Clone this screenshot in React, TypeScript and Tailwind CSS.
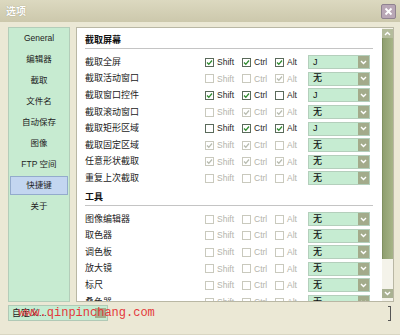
import React from "react";

type CS = "on" | "off" | "don" | "doff";

const FONT = "font-['Liberation_Sans','Noto_Sans_CJK_SC',sans-serif]";

function Box({ s }: { s: CS }) {
  const dis = s === "don" || s === "doff";
  const checked = s === "on" || s === "don";
  return (
    <div
      className={`w-[9px] h-[9px] border flex items-center justify-center ${
        dis ? "border-[#c9c9bd] bg-white" : "border-[#5a6a5a] bg-white"
      }`}
    >
      {checked && (
        <svg width="7" height="7" viewBox="0 0 7 7">
          <path
            d="M1 3.5 L2.8 5.3 L6 1.5"
            fill="none"
            stroke={dis ? "#b8bcb0" : "#2f8a2f"}
            strokeWidth="1.3"
          />
        </svg>
      )}
    </div>
  );
}

function Check({ s, label, w }: { s: CS; label: string; w: string }) {
  const dis = s === "don" || s === "doff";
  return (
    <div className={`${w} flex items-center gap-[3px]`}>
      <Box s={s} />
      <span className={`text-[8.5px] leading-none ${dis ? "text-[#b4b4ac]" : "text-[#2a2a2a]"}`}>{label}</span>
    </div>
  );
}

function Select({ v }: { v: string }) {
  return (
    <div className="w-[62px] h-[14px] bg-[#c6ecd2] border border-[#b4cfbc] flex items-center">
      <span className="flex-1 pl-[4px] text-[9px] leading-none text-[#111] font-medium">{v}</span>
      <div className="w-[11px] h-[12px] bg-[#a3ab8b] flex items-center justify-center">
        <svg width="7" height="5" viewBox="0 0 7 5">
          <path d="M1 1 L3.5 3.5 L6 1" fill="none" stroke="#fff" strokeWidth="1.4" />
        </svg>
      </div>
    </div>
  );
}

function Row({ label, s, c, a, v }: { label: string; s: CS; c: CS; a: CS; v: string }) {
  return (
    <div className="flex items-center h-[16.6px]">
      <div className="w-[128px] pl-[8px] text-[9px] leading-none text-[#222]">{label}</div>
      <Check s={s} label="Shift" w="w-[37px]" />
      <Check s={c} label="Ctrl" w="w-[33px]" />
      <Check s={a} label="Alt" w="w-[33px]" />
      <Select v={v} />
    </div>
  );
}

const sideItems = ["General", "编辑器", "截取", "文件名", "自动保存", "图像", "FTP 空间", "快捷键", "关于"];

export default function App() {
  const cap: [string, CS, CS, CS, string][] = [
    ["截取全屏", "on", "on", "on", "J"],
    ["截取活动窗口", "doff", "doff", "don", "无"],
    ["截取窗口控件", "on", "on", "off", "J"],
    ["截取滚动窗口", "doff", "don", "don", "无"],
    ["截取矩形区域", "off", "on", "on", "J"],
    ["截取固定区域", "don", "don", "doff", "无"],
    ["任意形状截取", "don", "don", "don", "无"],
    ["重复上次截取", "doff", "doff", "doff", "无"],
  ];
  const tools = ["图像编辑器", "取色器", "调色板", "放大镜", "标尺", "叠色器"];
  return (
    <div className={`relative w-[400px] h-[335px] bg-[#ebe8d5] flex flex-col overflow-hidden ${FONT}`}>
      {/* title bar */}
      <div className="h-[22px] shrink-0 bg-gradient-to-b from-[#dcd9c0] to-[#ccc8ac] flex items-center justify-between pl-[6px] pr-[4px]">
        <span className="text-white text-[10px] font-bold [text-shadow:0_0_1px_#8a866c]">选项</span>
        <div className="w-[15px] h-[15px] bg-[#b9a7b6] border border-[#8f8290] rounded-[2px] flex items-center justify-center">
          <svg width="9" height="9" viewBox="0 0 9 9">
            <path d="M1.5 1.5 L7.5 7.5 M7.5 1.5 L1.5 7.5" stroke="#fff" strokeWidth="1.8" />
          </svg>
        </div>
      </div>

      {/* body */}
      <div className="flex pt-[5px] pl-[8px] h-[276px] shrink-0">
        {/* sidebar */}
        <div className="w-[62px] h-[275px] bg-[#c7ebd1] border border-[#b3cdb9] flex flex-col items-center pt-[1px]">
          {sideItems.map((it) => (
            <div
              key={it}
              className={`w-[58px] h-[19px] mb-[2px] flex items-center justify-center text-[8.5px] leading-none text-[#222] ${
                it === "快捷键" ? "bg-[#c3d6f0] border border-[#93abcc]" : ""
              }`}
            >
              {it}
            </div>
          ))}
        </div>

        {/* content panel */}
        <div className="ml-[6px] w-[318px] h-[275px] bg-white border border-[#b9b7a4] flex overflow-hidden">
          <div className="w-[304px] flex flex-col">
            <div className="mx-[8px] pt-[5px] pb-[1px] leading-[14px] border-b border-[#c4c4c4] text-[9px] font-bold text-[#111]">
              截取屏幕
            </div>
            <div className="mt-[5px]">
              {cap.map((r) => (
                <Row key={r[0]} label={r[0]} s={r[1]} c={r[2]} a={r[3]} v={r[4]} />
              ))}
            </div>
            <div className="mx-[8px] pt-[3px] pb-[1px] leading-[14px] border-b border-[#c4c4c4] text-[9px] font-bold text-[#111]">
              工具
            </div>
            <div className="mt-[5px]">
              {tools.map((t) => (
                <Row key={t} label={t} s="doff" c="doff" a="doff" v="无" />
              ))}
            </div>
          </div>
          {/* scrollbar */}
          <div className="w-[11px] ml-[1px] flex flex-col bg-[#f4f3ea]">
            <div className="h-[9px] mt-[1px] bg-[#b4bc9c] flex items-center justify-center">
              <svg width="7" height="5" viewBox="0 0 7 5">
                <path d="M1 4 L3.5 1.5 L6 4" fill="none" stroke="#fff" strokeWidth="1.4" />
              </svg>
            </div>
            <div className="h-[221px] bg-gradient-to-r from-[#8f9f6f] to-[#a6b488] border-l border-[#7f8f60]" />
            <div className="flex-1" />
            <div className="h-[9px] mb-[3px] bg-[#a9b192] flex items-center justify-center">
              <svg width="7" height="5" viewBox="0 0 7 5">
                <path d="M1 1 L3.5 3.5 L6 1" fill="none" stroke="#fff" strokeWidth="1.4" />
              </svg>
            </div>
          </div>
        </div>
      </div>

      {/* bottom bar */}
      <div className="flex-1 flex items-start pl-[8px] pt-[7px] border-b border-[#d9d6c2] relative">
        <div className="w-[100px] h-[16px] bg-[#c6ecd2] border border-[#b0c9b6] flex items-center">
          <span className="flex-1 pl-[3px] text-[9px] leading-none text-[#222]">自定义...</span>
          <div className="w-[11px] h-[10px] bg-[#a3ab8b] mr-[1px]" />
        </div>
        <div className="absolute right-[9px] top-[8px] w-[3px] h-[15px] border-r border-y border-[#555]" />
      </div>

      {/* watermark */}
      <div className="absolute left-[18px] top-[305px] font-['Liberation_Mono',monospace] text-[12px] leading-[16px] text-[#e4393b]">
        www.qinpinchang.com
      </div>
    </div>
  );
}
